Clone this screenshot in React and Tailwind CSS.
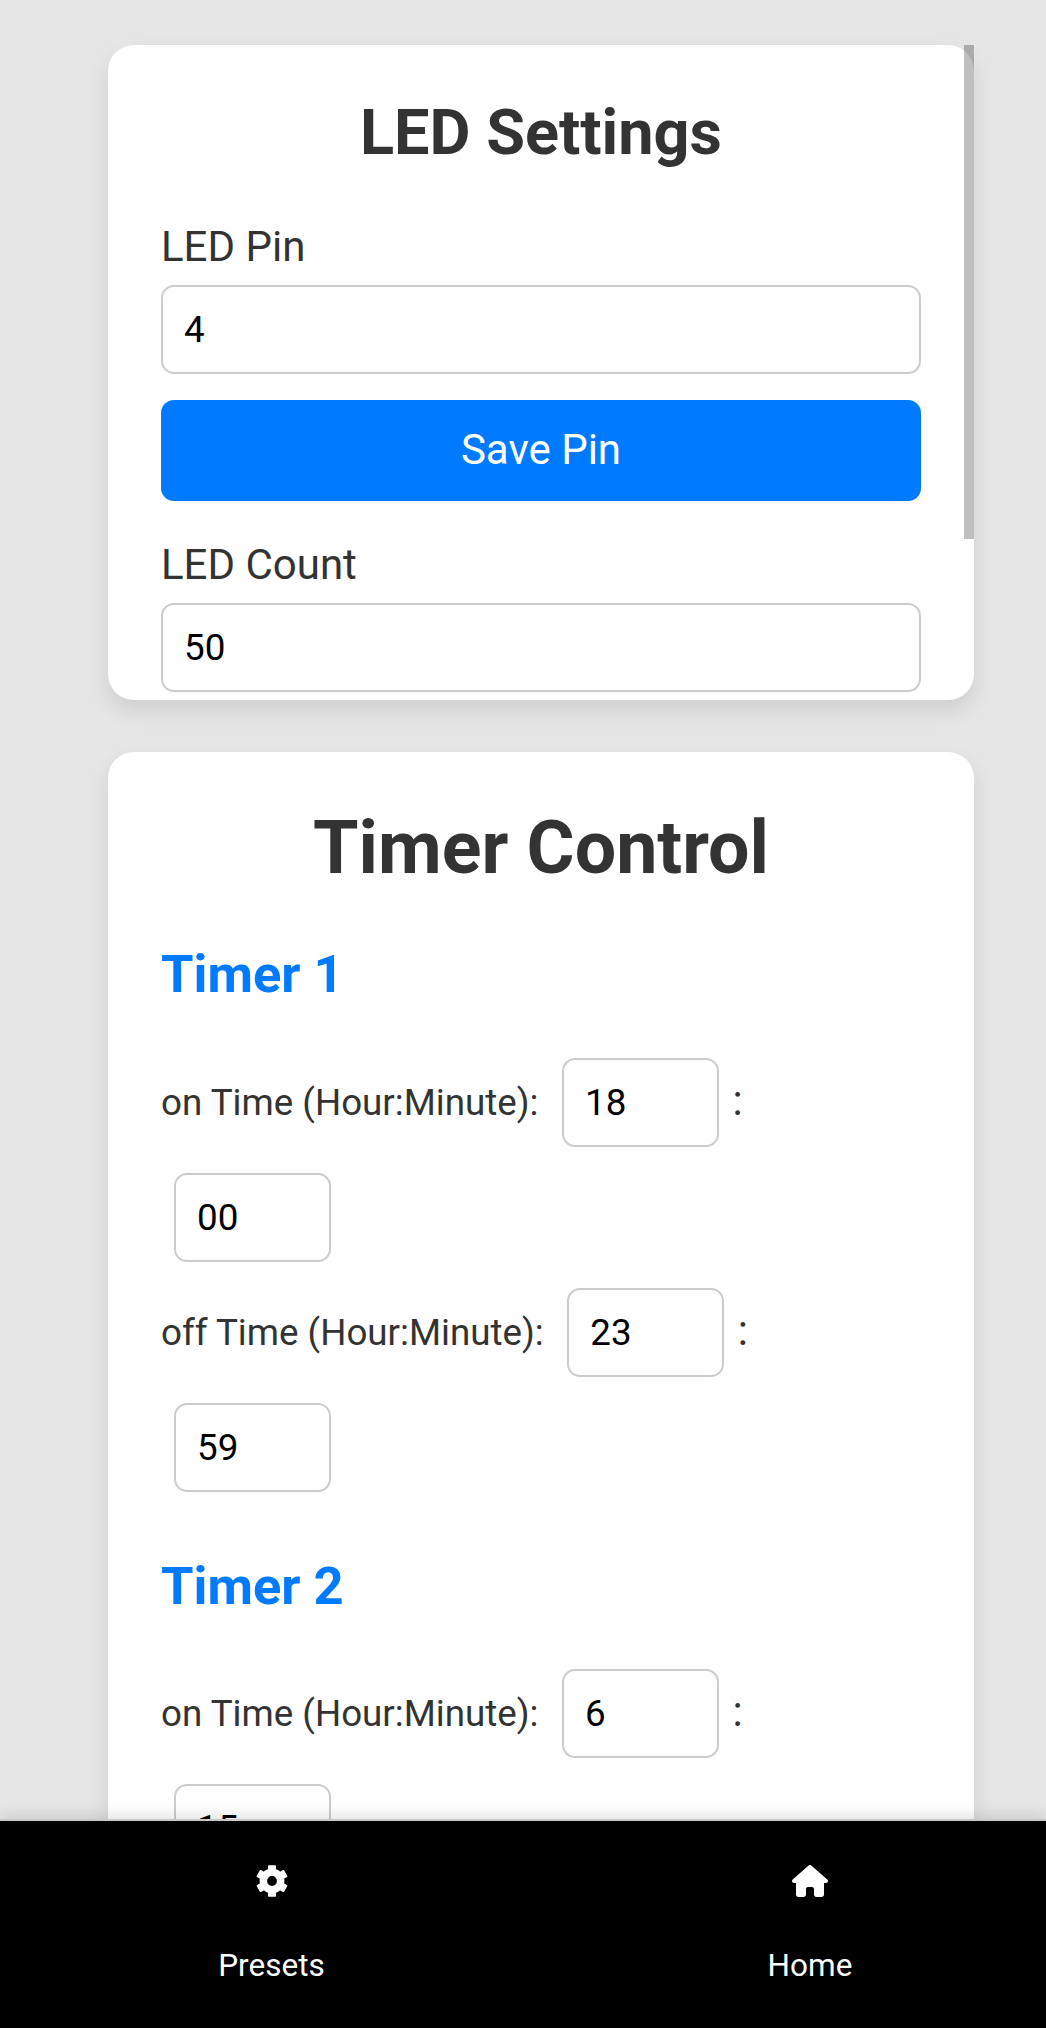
import { FaHouse } from "react-icons/fa6";

const fieldClass =
  "block h-[89px] rounded-[13px] border-2 border-[#ccc] bg-white px-[21px] text-[36.75px] leading-[43px] text-black outline-none";

// Six-tooth gear: three crossed bars, a round body and a punched centre.
function GearIcon({ className }) {
  return (
    <svg viewBox="0 0 36 32" fill="currentColor" className={className} aria-hidden="true">
      <mask id="gear-hole">
        <rect width="36" height="32" fill="white" />
        <circle cx="18" cy="16" r="4.9" fill="black" />
      </mask>
      <g mask="url(#gear-hole)">
        <circle cx="18" cy="16" r="12.4" />
        <rect x="14" y="0.2" width="8" height="31.6" rx="0.8" />
        <rect x="14" y="0.2" width="8" height="31.6" rx="0.8" transform="rotate(60 18 16)" />
        <rect x="14" y="0.2" width="8" height="31.6" rx="0.8" transform="rotate(120 18 16)" />
      </g>
    </svg>
  );
}

function PinField({ label, value, className }) {
  return (
    <label className={className}>
      <span className="block text-[42px] leading-[50px]">{label}</span>
      <input className={`${fieldClass} mt-[13px] w-full`} defaultValue={value} />
    </label>
  );
}

function TimeRow({ label, hour, minute }) {
  return (
    <div className="flex flex-col gap-[26px]">
      <div className="flex h-[89px] items-baseline">
        <span className="text-[36.75px] leading-[43px]">{label}</span>
        <input className={`${fieldClass} ml-[23.5px] w-[157px]`} defaultValue={hour} />
        <span className="ml-[13.5px] text-[42px] leading-[50px]">:</span>
      </div>
      <input className={`${fieldClass} ml-[13px] w-[157px]`} defaultValue={minute} />
    </div>
  );
}

function NavItem({ icon: Icon, label, className }) {
  return (
    <a className={`flex shrink-0 flex-col items-center ${className}`}>
      <Icon className="mt-[44px] h-[32px] w-[36px]" />
      <span className="mt-[50px] text-[31.5px] leading-[38px]">{label}</span>
    </a>
  );
}

export default function App() {
  return (
    <div className="flex h-[2028px] w-[1046px] flex-col overflow-hidden bg-[#e6e6e6] font-['Roboto',sans-serif] text-[#333]">
      <main className="flex min-h-0 flex-1 flex-col gap-[52px] pt-[45px] pr-[72px] pl-[108px]">
        <section className="relative h-[655px] shrink-0 rounded-[26px] bg-white px-[53px] pt-[50px] shadow-[0_10.5px_21px_rgba(0,0,0,0.1)]">
          <h2 className="text-center text-[63px] leading-[75px] font-bold">LED Settings</h2>
          <PinField label="LED Pin" value="4" className="mt-[52px] block" />
          <button className="mt-[26px] block h-[101px] w-full rounded-[13px] bg-[#007bff] pb-[2px] text-[42px] leading-[49px] text-white">
            Save Pin
          </button>
          <PinField label="LED Count" value="50" className="mt-[39px] block" />
          <div className="absolute top-0 right-0 h-[494px] w-[10px] bg-black/25" />
        </section>

        <section className="h-[1400px] shrink-0 rounded-[26px] bg-white px-[53px] pt-[52px] shadow-[0_10.5px_21px_rgba(0,0,0,0.1)]">
          <h1 className="text-center text-[73.5px] leading-[88px] font-bold">Timer Control</h1>
          <h3 className="mt-[51px] text-[52.5px] leading-[62px] font-bold text-[#007bff]">Timer 1</h3>
          <div className="mt-[53px] flex flex-col gap-[26px]">
            <TimeRow label="on Time (Hour:Minute):" hour="18" minute="00" />
            <TimeRow label="off Time (Hour:Minute):" hour="23" minute="59" />
          </div>
          <h3 className="mt-[63px] text-[52.5px] leading-[62px] font-bold text-[#007bff]">Timer 2</h3>
          <div className="mt-[52px]">
            <TimeRow label="on Time (Hour:Minute):" hour="6" minute="15" />
          </div>
        </section>
      </main>

      <nav className="relative z-10 flex h-[209px] shrink-0 overflow-visible border-t-2 border-[#c8c8c8] bg-black text-white shadow-[0_-5px_13px_rgba(0,0,0,0.1)]">
        <NavItem icon={GearIcon} label="Presets" className="w-[543px]" />
        <NavItem icon={FaHouse} label="Home" className="w-[534px]" />
      </nav>
    </div>
  );
}
